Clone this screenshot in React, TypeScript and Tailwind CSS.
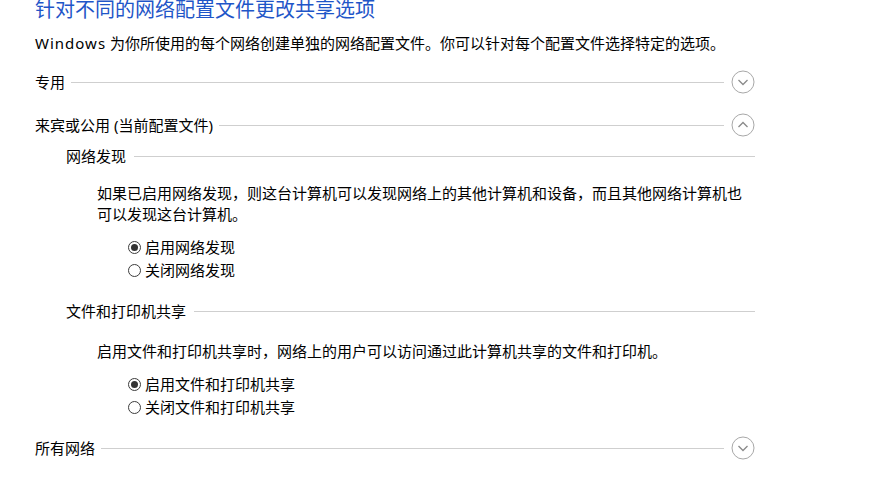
import React from 'react';

const FONT = { fontFamily: '"Noto Sans", "Noto Sans CJK SC", sans-serif' };

const ToggleCircle: React.FC<{ open?: boolean }> = ({ open }) => (
  <svg width="24" height="24" viewBox="0 0 24 24" className="flex-shrink-0 ml-[7px]">
    <circle cx="12" cy="12" r="11" fill="none" stroke="#a8a8a8" strokeWidth="1" />
    {open ? (
      <polyline points="7.5,14 12,9.5 16.5,14" fill="none" stroke="#8a8a8a" strokeWidth="1.3" />
    ) : (
      <polyline points="7.5,10 12,14.5 16.5,10" fill="none" stroke="#8a8a8a" strokeWidth="1.3" />
    )}
  </svg>
);

const SectionHeader: React.FC<{ label: string; open?: boolean; className?: string }> = ({
  label,
  open,
  className = '',
}) => (
  <div className={`flex items-center h-[24px] ${className}`}>
    <span className="whitespace-nowrap leading-[21px]">{label}</span>
    <div className="flex-1 h-px bg-[#cfcfcf] ml-[6px]" />
    <ToggleCircle open={open} />
  </div>
);

const SubHeader: React.FC<{ label: string; className?: string }> = ({ label, className = '' }) => (
  <div className={`flex items-center h-[21px] pl-[31px] ${className}`}>
    <span className="whitespace-nowrap leading-[21px]">{label}</span>
    <div className="flex-1 h-px bg-[#cfcfcf] ml-[8px]" />
  </div>
);

const Radio: React.FC<{ label: string; checked?: boolean }> = ({ label, checked }) => (
  <label className="flex items-center h-[23px] pl-[93px] gap-[4px]">
    <span className="w-[13px] h-[13px] rounded-full border border-[#3c3c3c] bg-white flex items-center justify-center flex-shrink-0">
      {checked && <span className="w-[7px] h-[7px] rounded-full bg-[#333333]" />}
    </span>
    <span className="leading-[23px]">{label}</span>
  </label>
);

export default function App() {
  return (
    <div className="w-[881px] h-[495px] bg-white overflow-hidden text-black text-[15px]" style={FONT}>
      <div className="pl-[35px] w-[755px]">
        <h1 className="text-[20px] leading-[22px] h-[22px] mt-[-1px] text-[#1f56c8] font-normal whitespace-nowrap">
          针对不同的网络配置文件更改共享选项
        </h1>
        <p className="mt-[12px] leading-[21px] whitespace-nowrap">
          <span className="tracking-[1px]">Windows</span> 为你所使用的每个网络创建单独的网络配置文件。你可以针对每个配置文件选择特定的选项。
        </p>

        <SectionHeader label="专用" className="mt-[16px]" />
        <SectionHeader label="来宾或公用 (当前配置文件)" open className="mt-[19px]" />

        <SubHeader label="网络发现" className="mt-[9px]" />
        <p className="mt-[16px] pl-[62px] leading-[21px]">
          如果已启用网络发现，则这台计算机可以发现网络上的其他计算机和设备，而且其他网络计算机也可以发现这台计算机。
        </p>
        <div className="mt-[11px]">
          <Radio label="启用网络发现" checked />
          <Radio label="关闭网络发现" />
        </div>

        <SubHeader label="文件和打印机共享" className="mt-[19px]" />
        <p className="mt-[19px] pl-[62px] leading-[21px]">
          启用文件和打印机共享时，网络上的用户可以访问通过此计算机共享的文件和打印机。
        </p>
        <div className="mt-[11px]">
          <Radio label="启用文件和打印机共享" checked />
          <Radio label="关闭文件和打印机共享" />
        </div>

        <SectionHeader label="所有网络" className="mt-[17px]" />
      </div>
    </div>
  );
}
